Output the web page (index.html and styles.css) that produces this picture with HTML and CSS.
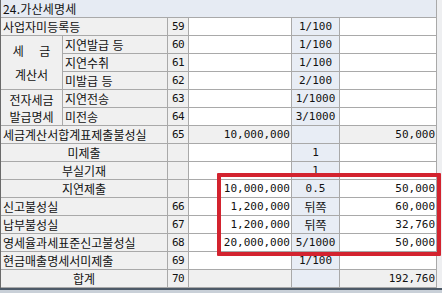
FILE: index.html
```html
<!DOCTYPE html>
<html lang="ko">
<head>
<meta charset="utf-8">
<link rel="stylesheet" href="styles.css">
</head>
<body>
<div class="sheet">
  <table class="grid">
    <colgroup>
      <col class="c-grp"><col class="c-sub"><col class="c-no"><col class="c-amt"><col class="c-rate"><col class="c-tax">
    </colgroup>
    <tr class="head"><td colspan="6">24.가산세명세</td></tr>
    <tr><td colspan="2" class="lab">사업자미등록등</td><td class="no">59</td><td class="amt"></td><td class="rate">1/100</td><td class="tax"></td></tr>
    <tr><td rowspan="3" class="grp"><div class="gl wide">세 금</div><div class="gl">계산서</div></td><td class="lab">지연발급 등</td><td class="no">60</td><td class="amt"></td><td class="rate">1/100</td><td class="tax"></td></tr>
    <tr><td class="lab">지연수취</td><td class="no">61</td><td class="amt"></td><td class="rate">1/100</td><td class="tax"></td></tr>
    <tr><td class="lab">미발급 등</td><td class="no">62</td><td class="amt"></td><td class="rate">2/100</td><td class="tax"></td></tr>
    <tr><td rowspan="2" class="grp grp2"><div class="gl2">전자세금</div><div class="gl2">발급명세</div></td><td class="lab">지연전송</td><td class="no">63</td><td class="amt"></td><td class="rate">1/1000</td><td class="tax"></td></tr>
    <tr><td class="lab">미전송</td><td class="no">64</td><td class="amt"></td><td class="rate">3/1000</td><td class="tax"></td></tr>
    <tr class="shade"><td colspan="2" class="lab">세금계산서합계표제출불성실</td><td class="no">65</td><td class="amt">10,000,000</td><td class="rate"></td><td class="tax">50,000</td></tr>
    <tr><td colspan="2" class="lab ctr">미제출</td><td class="no"></td><td class="amt"></td><td class="rate">1</td><td class="tax"></td></tr>
    <tr><td colspan="2" class="lab ctr">부실기재</td><td class="no"></td><td class="amt"></td><td class="rate">1</td><td class="tax"></td></tr>
    <tr><td colspan="2" class="lab ctr">지연제출</td><td class="no"></td><td class="amt">10,000,000</td><td class="rate">0.5</td><td class="tax">50,000</td></tr>
    <tr><td colspan="2" class="lab">신고불성실</td><td class="no">66</td><td class="amt">1,200,000</td><td class="rate ko">뒤쪽</td><td class="tax">60,000</td></tr>
    <tr><td colspan="2" class="lab">납부불성실</td><td class="no">67</td><td class="amt">1,200,000</td><td class="rate ko">뒤쪽</td><td class="tax">32,760</td></tr>
    <tr><td colspan="2" class="lab">영세율과세표준신고불성실</td><td class="no">68</td><td class="amt">20,000,000</td><td class="rate">5/1000</td><td class="tax">50,000</td></tr>
    <tr><td colspan="2" class="lab">현금매출명세서미제출</td><td class="no">69</td><td class="amt"></td><td class="rate">1/100</td><td class="tax"></td></tr>
    <tr class="shade"><td colspan="2" class="lab ctr">합계</td><td class="no">70</td><td class="amt"></td><td class="rate"></td><td class="tax">192,760</td></tr>
  </table>
  <div class="redbox"></div>
</div>
</body>
</html>
```

FILE: styles.css
```css
html, body {
  margin: 0;
  padding: 0;
}
body {
  width: 442px;
  height: 293px;
  overflow: hidden;
  background: #c9d0d8;
  font-family: "Noto Sans CJK KR", "Noto Sans", sans-serif;
  font-size: 12px;
  color: #111;
}
.sheet {
  position: relative;
  width: 442px;
  background: #eeeff1;
  border-bottom: 2px solid #4d5a68;
}
.grid {
  border-collapse: separate;
  border-spacing: 0;
  table-layout: fixed;
  width: 437px;
  border-left: 1px solid #6a6a6a;
}
.c-grp { width: 62px; }
.c-sub { width: 105px; }
.c-no { width: 21px; }
.c-amt { width: 103px; }
.c-rate { width: 48px; }
.c-tax { width: 97px; }
.grid td {
  padding: 0;
  height: 17px;
  line-height: 17px;
  border-right: 1px solid #a9a9a9;
  border-bottom: 1px solid #a9a9a9;
  white-space: nowrap;
  overflow: hidden;
  background: #fff;
  vertical-align: middle;
}
.grid tr.head td {
  background: #e6ebf3;
  padding-left: 2px;
  letter-spacing: 0.2px;
}
.grid td.lab, .grid td.grp, .grid td.no {
  background: #f0f0f0;
}
.grid td.lab {
  padding-left: 2px;
}
.grid td.lab.ctr {
  text-align: center;
  padding-left: 0;
}
.grid td.grp {
  text-align: center;
}
.gl {
  line-height: 24px;
}
.gl.wide {
  word-spacing: 12px;
}
.gl2 {
  line-height: 17px;
}
.grid td.no {
  text-align: center;
  font-family: "DejaVu Sans Mono", monospace;
  font-size: 11px;
  letter-spacing: -0.5px;
}
.grid td.amt, .grid td.tax, .grid td.rate {
  font-family: "DejaVu Sans Mono", monospace;
  font-size: 11px;
}
.grid td.amt, .grid td.tax {
  text-align: right;
  padding-right: 1px;
}
.grid td.rate {
  text-align: center;
  background: #e8edf5;
}
.grid td.rate.ko {
  font-family: "Noto Sans CJK KR", sans-serif;
  font-size: 12px;
}
.grid tr.shade td {
  background: #f0f0f0;
}
.grid tr.shade td.rate {
  background: #e8edf5;
}
.redbox {
  position: absolute;
  left: 217px;
  top: 173px;
  width: 216px;
  height: 75px;
  border: 4px solid #d3232f;
  border-radius: 1px;
  pointer-events: none;
}
```
